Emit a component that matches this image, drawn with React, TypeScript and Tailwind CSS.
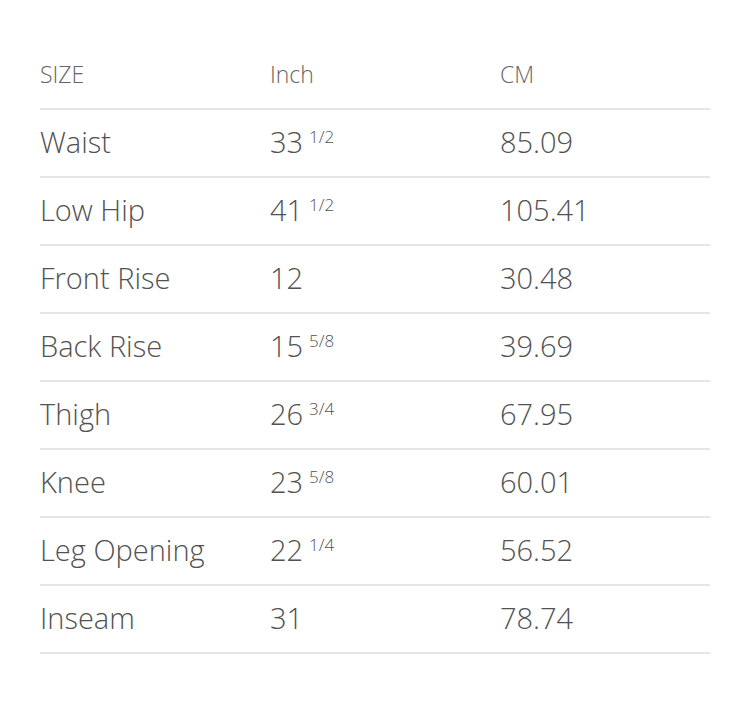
const ROWS: [string, string, string | null, string][] = [
  ['Waist', '33', '1/2', '85.09'],
  ['Low Hip', '41', '1/2', '105.41'],
  ['Front Rise', '12', null, '30.48'],
  ['Back Rise', '15', '5/8', '39.69'],
  ['Thigh', '26', '3/4', '67.95'],
  ['Knee', '23', '5/8', '60.01'],
  ['Leg Opening', '22', '1/4', '56.52'],
  ['Inseam', '31', null, '78.74'],
];

export default function App() {
  return (
    <div className="w-[750px] h-[720px] bg-white pt-[43px] px-[40px] font-light" style={{ fontFamily: '"Open Sans", "Noto Sans", sans-serif' }}>
      <div className="grid grid-cols-[230px_230px_1fr] h-[67px] items-center border-b-2 border-[#e6e6e6] text-[23px] text-[#666] pb-[2px]">
        <span>SIZE</span>
        <span>Inch</span>
        <span>CM</span>
      </div>
      {ROWS.map(([name, whole, frac, cm]) => (
        <div key={name} className="grid grid-cols-[230px_230px_1fr] h-[68px] items-center border-b-2 border-[#e6e6e6] text-[29px] text-[#525252] pb-[3px]">
          <span>{name}</span>
          <span>
            {whole}
            {frac && <sup className="ml-[6px] text-[17px] top-[-0.55em]">{frac}</sup>}
          </span>
          <span>{cm}</span>
        </div>
      ))}
    </div>
  );
}
